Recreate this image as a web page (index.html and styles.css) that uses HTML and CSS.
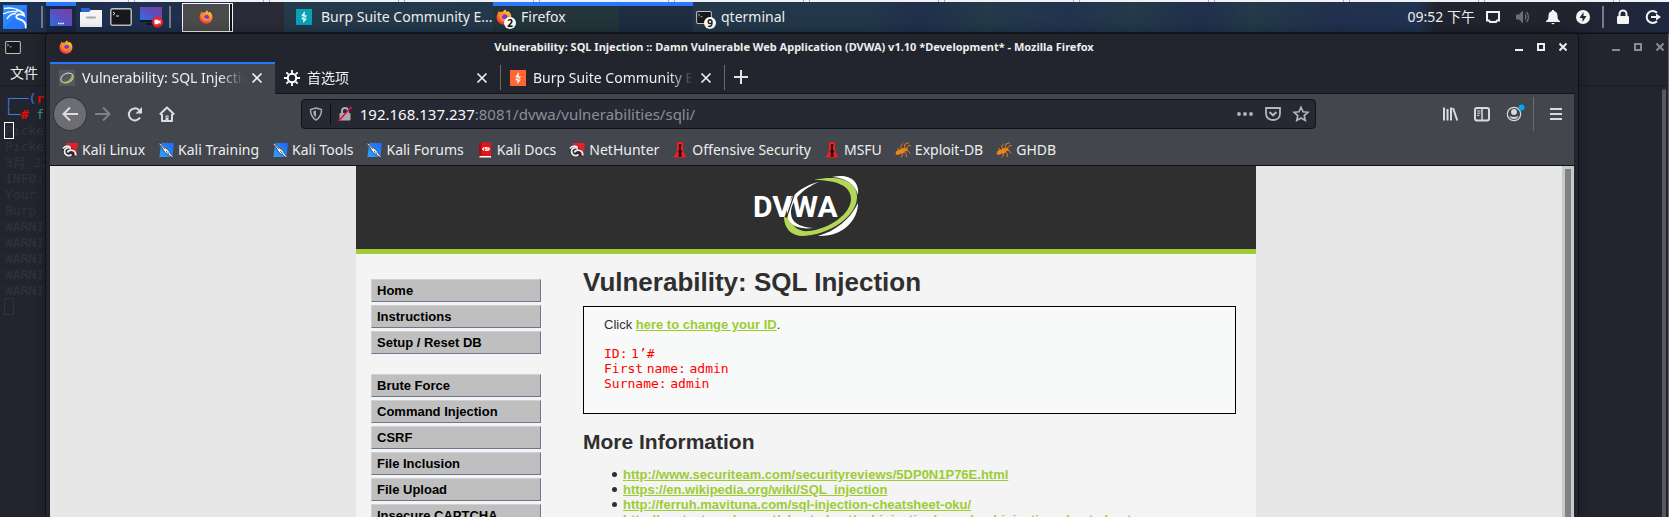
FILE: index.html
```html
<!DOCTYPE html>
<html lang="zh-CN">
<head>
<meta charset="utf-8">
<title>Vulnerability: SQL Injection</title>
<link rel="stylesheet" href="styles.css">
</head>
<body>
<svg class="defs" aria-hidden="true">
  <defs>
    <linearGradient id="g-desk" x1="0" y1="1" x2="1" y2="0"><stop offset="0" stop-color="#2a74e8"/><stop offset=".5" stop-color="#5a4fc0"/><stop offset="1" stop-color="#7d3f9c"/></linearGradient>
    <linearGradient id="g-fox" x1=".8" y1="0" x2=".2" y2="1"><stop offset="0" stop-color="#ffd83a"/><stop offset=".5" stop-color="#ff7a2a"/><stop offset="1" stop-color="#f0284f"/></linearGradient>
    <linearGradient id="g-kali" x1="1" y1="0" x2="0" y2="1"><stop offset="0" stop-color="#1d66f0"/><stop offset="1" stop-color="#2ba6ff"/></linearGradient>
  </defs>
  <symbol id="firefox" viewBox="0 0 16 16"><path fill="url(#g-fox)" d="M2 4C2.200 3 2.700 2.200 3.200 1.800 3.200 2.600 3.600 3 4 3.200 5 2.700 6 2.800 6.800 3 7.200 1.800 8.500.8 9.600.5 9.600 1.600 10.300 2.200 11.200 3L12 2C14.500 3.800 15.600 6.200 15.300 9 14.800 12.800 11.800 15.600 8 15.600 3.600 15.600.600 12.300.600 8.500.600 6.800 1.200 5.200 2 4Z"/><circle cx="8.300" cy="8.600" r="3.300" fill="#6a3fd8"/><path fill="#ff8a2c" d="M2.500 5C4.500 4 6.500 4.600 8 6 6.500 6.400 6 7 6 7.800 6 9.500 7.500 10.400 9.300 10 10.500 9.800 11.400 9 11.800 8 12.500 10.500 10.500 12.600 8 12.600 4.500 12.600 2.600 9.500 2.500 5Z"/></symbol>
  <symbol id="term" viewBox="0 0 22 18"><rect x=".8" y=".8" width="20.400" height="16.400" rx="1.500" fill="#17181b" stroke="#c2c2c2" stroke-width="1.400"/><path d="M3 4l2 1.500L3 7M6 8h3" stroke="#ddd" fill="none"/></symbol>
  <symbol id="burp" viewBox="0 0 16 16"><path fill="#fff" d="M8.700 2v4.400h2.500L8.500 9.500V7.200H5.200zM7.300 14V10.200H5l2.600-3v2.200h3.300z"/></symbol>
  <symbol id="close" viewBox="0 0 12 12"><path d="M1.500 1.500l9 9M10.500 1.500l-9 9" stroke="currentColor" stroke-width="1.700" fill="none"/></symbol>
  <symbol id="kali" viewBox="0 0 16 16"><path fill="url(#g-kali)" d="M3 1h13l-1.500 14H1.500z"/><path fill="#f6f9ff" stroke="#17233c" stroke-width=".7" d="M-.3.6C2.500 1.300 5 3 6.500 5.200l3.300 2.600c1.400 1.200 2 2.400 2.400 3.600l3.900 4.300c-2.300-.4-4.100-1.400-5.300-3C8.600 12 7.200 11 6.300 9.300L5.200 7.800C3.800 5.300 2.200 3 -.3.600z"/><path stroke="#17233c" stroke-width=".7" fill="none" d="M3 3.400l3.800 3.400M8 9l3 2.500"/></symbol>
  <symbol id="kalired" viewBox="0 0 16 16"><path fill="#e3202c" d="M3.500 1H16l-1.500 11-3 3z"/><path fill="#1d1e22" d="M.5 8c0-3 3-5 6.500-4.500l7.500 6-1 5H5C2 14 .5 11 .5 8z" opacity=".75"/><path d="M1 6.500C3 4 6 3.800 8.300 5.300M9 6.500C6 4.500 2.300 6.600 2.500 9.700c.3 3.600 4.800 5.300 7 2.700M5.500 10.500C6 8.200 9.500 7.300 12 9c1.300.9 1.900 2.500 1.500 4.500" fill="none" stroke="#eee" stroke-width="1.800"/></symbol>
  <symbol id="docs" viewBox="0 0 16 16"><path fill="#a70d12" d="M2 .5h3V16H2z"/><path fill="#e5141b" d="M4.500.5H14V14H4.500z"/><path fill="#fff" d="M2.500 14H14v1.500H2.500z"/><path stroke="#fff" fill="none" stroke-width="1.100" d="M7 5.500L5.600 7 7 8.500M11 5.500L12.500 7 11 8.500M10.500 5.500H8.200v1.400h2V8.500H8"/></symbol>
  <symbol id="offsec" viewBox="0 0 16 16"><path fill="#ef1d25" d="M5 0h6v9l3.500 6.500h-13L5 9z"/><path fill="#26090b" d="M7 2h2.200l-.3 5.500 1.300 2.200-1 1.300.6 3.800H6.500L7 11 6 9.700l1.200-2.200z"/></symbol>
  <symbol id="bug" viewBox="0 0 16 16"><path fill="#ee8414" d="M.8 10.500C1.500 8.300 3.500 8 5 7.600 6.500 6 8.500 6.200 9.500 6.500l2.500-.7.800 1.800-2.500 1.600c-1 2.200-3 2.400-4.500 2.200C4.500 12.700 2.300 13 .8 12.500z"/><path stroke="#ee8414" fill="none" stroke-width=".9" d="M7 7L5.500 4 8 1.500M9 7l1-5L14 .6M11 6.500l2.500-3 2.500.2M10 8.500l3.200.2 2 2.800M9 9.500l2 2 .5 3.500M6.500 10.500l1 2.500L6 15.500M4 8L2.500 6"/></symbol>
</svg>

<div class="strip"></div>

<header class="panel">
  <button class="pi kali-menu" aria-label="Applications"><svg width="24" height="24" viewBox="0 0 24 24"><path fill="#2777ff" d="M0 0h24v20l-4 4H0z"/><path fill="#2d9cff" d="M0 0h24L0 24z" opacity=".5"/><path d="M1 3.500c5-1 9-.6 13 1M0 9c5-2.500 10-3.200 14.500-2M4 14c2-4 6-5.500 9-5.500" fill="none" stroke="#fff" stroke-width="1.300"/><path d="M13 4.500c2 .5 5 1.500 7.500 4L21 10.500c-2-1-4-1.300-5.500-1-2.500.5-3 3-1 4 4 1.500 6 2 7.500 4.500 1 1.800 1 3.500.5 5.500" fill="none" stroke="#fff" stroke-width="1.900"/></svg></button>
  <span class="sep"></span>
  <button class="pi active" aria-label="Show desktop"><svg width="22" height="18" viewBox="0 0 22 18"><rect width="22" height="17" fill="url(#g-desk)"/><path d="M8 14.500h6" stroke="#fff" stroke-width="1.500" stroke-dasharray="1.500 .7"/></svg></button>
  <button class="pi" aria-label="Files"><svg width="22" height="21" viewBox="0 0 22 21"><path fill="#2467d6" d="M1 1h8l2 2h9v5H1z"/><path fill="#f3f3f3" d="M0 5h9l2-2h11v17H0z"/><path d="M7 10.500h8" stroke="#aaa" stroke-width="2" stroke-linecap="round"/></svg></button>
  <button class="pi" aria-label="Terminal"><svg width="22" height="18"><use href="#term"/></svg></button>
  <button class="pi" aria-label="Screen recorder"><svg width="23" height="21" viewBox="0 0 23 21"><path fill="url(#g-desk)" d="M0 0h22v13H0z"/><path fill="#17181e" d="M0 13h22v2H0zM6 16h9v2H6z"/><circle cx="17.500" cy="15" r="5.500" fill="#e9252e"/><path fill="#fff" d="M14.500 12.800h4v1.500l2-1.300v4l-2-1.300v1.500h-4z"/></svg></button>
  <span class="sep"></span>
  <button class="workspace" aria-label="Workspace 1"><svg width="14" height="14"><use href="#firefox"/></svg></button>
  <nav class="tasks">
    <button class="task"><span class="ticon burp-teal"><svg width="16" height="16"><use href="#burp"/></svg></span><span class="tlabel">Burp Suite Community E...</span></button>
    <button class="task current"><span class="ticon"><svg width="16" height="16"><use href="#firefox"/></svg><b class="badge">2</b></span><span class="tlabel">Firefox</span></button>
    <button class="task"><span class="ticon"><svg width="16" height="13"><use href="#term"/></svg><b class="badge">9</b></span><span class="tlabel">qterminal</span></button>
  </nav>
  <div class="tray">
    <time>09:52 下午</time>
    <svg width="16" height="16" viewBox="0 0 16 16"><path d="M2 3h12v8.500h-2l-1 1.500H5l-1-1.500H2z" fill="none" stroke="#f2f2f2" stroke-width="2"/></svg>
    <svg width="16" height="16" viewBox="0 0 16 16"><path fill="#6b6e78" d="M1 5.500h3L8 1.500v13l-4-4H1z"/><path d="M10 5.500q2 2.500 0 5M11.500 3q4 5 0 10" stroke="#6b6e78" stroke-width="1.300" fill="none"/></svg>
    <svg width="16" height="16" viewBox="0 0 16 16"><path fill="#f4f4f4" d="M7 1h2v1c2.500.6 3.500 2.500 3.500 5 0 3 .8 4 2.500 5v1H1v-1c1.700-1 2.500-2 2.500-5C3.500 4.500 4.500 2.600 7 2zM6 14h4l-2 1.500z"/></svg>
    <svg width="16" height="16" viewBox="0 0 16 16"><circle cx="8" cy="8" r="7" fill="#f4f4f4"/><path fill="#20242e" d="M8.500 3v4h3l-4 6V9h-3z"/></svg>
    <span class="sep"></span>
    <svg width="16" height="16" viewBox="0 0 16 16"><rect x="2" y="7" width="12" height="8" rx="1" fill="#f4f4f4"/><path d="M4.500 8V5a3.500 3.500 0 0 1 7 0v3" fill="none" stroke="#f4f4f4" stroke-width="2"/></svg>
    <svg width="16" height="16" viewBox="0 0 16 16"><path d="M12 3.800A6 6 0 1 0 12 12.200" fill="none" stroke="#f4f4f4" stroke-width="2"/><path fill="#f4f4f4" d="M6 7h5V4.500L16 8l-5 3.500V9H6z"/></svg>
  </div>
</header>

<div class="desktop">
  <section class="terminal">
    <div class="term-title">
      <svg width="16" height="13"><use href="#term"/></svg>
      <div class="winbtns"><button aria-label="Minimize"><svg width="8" height="8" viewBox="0 0 8 8"><path d="M0 7h8" stroke="currentColor" stroke-width="2"/></svg></button><button aria-label="Maximize"><svg width="8" height="8" viewBox="0 0 8 8"><rect x="1" y="1" width="6" height="6" fill="none" stroke="currentColor" stroke-width="2"/></svg></button><button aria-label="Close"><svg width="8" height="8" viewBox="0 0 8 8"><path d="M.5.5l7 7M7.500.5l-7 7" stroke="currentColor" stroke-width="2"/></svg></button></div>
    </div>
    <div class="term-menu">文件</div>
    <div class="term-body">
<pre><span class="tb">┌──(</span><b class="tr">root</b>
<span class="tb">└─</span><b class="tr">#</b> <span class="tg">firefox</span>
<span class="cursor">P</span>icked
Picked
3月 22
INFO:
Your
Burp
WARNING
WARNING
WARNING
WARNING
WARNING
<span class="cursor dim"> </span></pre>
      <div class="term-scroll"></div>
    </div>
  </section>

  <section class="browser">
    <div class="titlebar">
      <svg width="14" height="14"><use href="#firefox"/></svg>
      <span class="wtitle">Vulnerability: SQL Injection :: Damn Vulnerable Web Application (DVWA) v1.10 *Development* - Mozilla Firefox</span>
      <div class="winbtns"><button aria-label="Minimize"><svg width="8" height="8" viewBox="0 0 8 8"><path d="M0 7h8" stroke="currentColor" stroke-width="2"/></svg></button><button aria-label="Maximize"><svg width="8" height="8" viewBox="0 0 8 8"><rect x="1" y="1" width="6" height="6" fill="none" stroke="currentColor" stroke-width="2"/></svg></button><button aria-label="Close"><svg width="8" height="8" viewBox="0 0 8 8"><path d="M.5.5l7 7M7.500.5l-7 7" stroke="currentColor" stroke-width="2"/></svg></button></div>
    </div>
    <div class="chrome">
      <div class="tabs">
        <div class="tab selected"><svg class="fav" width="16" height="16" viewBox="0 0 16 16"><rect width="16" height="16" fill="#55585c"/><ellipse cx="8" cy="8" rx="6.500" ry="4.500" transform="rotate(-25 8 8)" fill="none" stroke="#d8d8d8"/><path d="M3 12c5 1.500 10-2 10.500-7" fill="none" stroke="#9acb3a" stroke-width="1.300"/></svg><span class="tabtext">Vulnerability: SQL Injection</span><button aria-label="Close tab"><svg width="12" height="12"><use href="#close"/></svg></button></div>
        <div class="tab"><svg class="fav" width="16" height="16" viewBox="0 0 16 16"><circle cx="8" cy="8" r="4.200" fill="none" stroke="#fff" stroke-width="2"/><path d="M8 0v3M8 13v3M0 8h3M13 8h3M2.400 2.400l2 2M11.600 11.600l2 2M13.600 2.400l-2 2M4.400 11.600l-2 2" stroke="#fff" stroke-width="1.800"/></svg><span class="tabtext">首选项</span><button aria-label="Close tab"><svg width="12" height="12"><use href="#close"/></svg></button></div>
        <div class="tab divided"><svg class="fav burp-orange" width="16" height="16"><use href="#burp"/></svg><span class="tabtext">Burp Suite Community Edition</span><button aria-label="Close tab"><svg width="12" height="12"><use href="#close"/></svg></button></div>
        <button class="newtab" aria-label="New tab"><svg width="14" height="14" viewBox="0 0 14 14"><path d="M7 0v14M0 7h14" stroke="#e4e4e4" stroke-width="2"/></svg></button>
      </div>
      <div class="navbar">
        <button class="nb back" aria-label="Back"><svg width="16" height="16" viewBox="0 0 16 16"><path d="M16 8H1.500M8 1.500L1.500 8 8 14.500" fill="none" stroke="#ddd" stroke-width="2"/></svg></button>
        <button class="nb" aria-label="Forward"><svg width="16" height="16" viewBox="0 0 16 16"><path d="M0 8h14.500M8 1.500L14.500 8 8 14.500" fill="none" stroke="#7d8085" stroke-width="2"/></svg></button>
        <button class="nb" aria-label="Reload"><svg width="16" height="16" viewBox="0 0 16 16"><path d="M13 11.500A6 6 0 1 1 12 4" fill="none" stroke="#ddd" stroke-width="2"/><path fill="#ddd" d="M15 1v6.500H8.500z"/></svg></button>
        <button class="nb" aria-label="Home"><svg width="16" height="16" viewBox="0 0 16 16"><path d="M.8 8.500L8 1.500l7.200 7M3 8v7h10V8" fill="none" stroke="#ddd" stroke-width="2" stroke-linejoin="round"/><path fill="#ddd" d="M6.500 9.500h3V15h-3z"/><path fill="#41444a" d="M7.500 10.500h1V12h-1z"/></svg></button>
        <div class="spring"></div>
        <div class="urlbar">
          <svg width="14" height="14" viewBox="0 0 14 14"><path d="M7 1l5.500 1.500c0 5-1 8-5.500 10.500C2.500 10.500 1.500 7.500 1.500 2.500z" fill="none" stroke="#aaabb0" stroke-width="1.500"/><path fill="#aaabb0" d="M7 3.500l-2.700.8c0 3 .7 4.700 2.700 6z"/></svg>
          <span class="usep"></span>
          <svg width="16" height="16" viewBox="0 0 16 16"><rect x="2.500" y="7" width="11" height="7.500" rx="1" fill="#aaabb0"/><path d="M5 8V5a3 3 0 0 1 6 0v3" fill="none" stroke="#aaabb0" stroke-width="2"/><path d="M1.500 15L14.500 1" stroke="#e3124b" stroke-width="1.800"/></svg>
          <a class="address" href="#">192.168.137.237<span>:8081/dvwa/vulnerabilities/sqli/</span></a>
          <svg width="16" height="16" viewBox="0 0 16 16" fill="#b5b6ba"><circle cx="2" cy="8" r="1.900"/><circle cx="8" cy="8" r="1.900"/><circle cx="14" cy="8" r="1.900"/></svg>
          <svg width="16" height="16" viewBox="0 0 16 16" fill="none" stroke="#b5b6ba" stroke-width="1.800"><path d="M1 2h14v5.500c0 4-3 6.500-7 6.500s-7-2.500-7-6.500z"/><path d="M4.500 6L8 9.300 11.500 6" stroke-width="2"/></svg>
          <svg width="16" height="16" viewBox="0 0 16 16" fill="none" stroke="#b5b6ba" stroke-width="1.600"><path d="M8 1.300l2 4.500 4.900.5-3.700 3.300 1.100 4.900L8 12l-4.300 2.500 1.100-4.900L1.100 6.300 6 5.800z"/></svg>
        </div>
        <div class="spring"></div>
        <div class="tools">
          <svg width="16" height="16" viewBox="0 0 16 16" stroke="#dadada" stroke-width="2"><path d="M2 1.500v13M5.500 3v11.500M9 1.500v13M11 2l4.300 12.500"/></svg>
          <svg width="16" height="16" viewBox="0 0 16 16" fill="none" stroke="#dadada" stroke-width="2"><rect x="1" y="2" width="14" height="12.500" rx="2"/><path d="M8 2v12.500" stroke-width="1.500"/><path d="M3 5h3.500M3 7.200h3.500M3 9.400h2.500" stroke-width="1"/></svg>
          <svg width="16" height="16" viewBox="0 0 16 16"><circle cx="8" cy="8" r="6.700" fill="none" stroke="#dadada" stroke-width="1.200"/><circle cx="8" cy="6" r="2.900" fill="#dadada"/><path fill="#dadada" d="M3.500 10c3 1.200 6 1.200 9 0-.8 4-8.200 4-9 0z"/><circle class="dot" cx="15.500" cy="1.500" r="3" fill="#00a8f5"/></svg>
        </div>
        <span class="tsep"></span>
        <button class="burger" aria-label="Menu"><svg width="12" height="14" viewBox="0 0 12 14"><path d="M0 2h12M0 7h12M0 12h12" stroke="#dadada" stroke-width="2"/></svg></button>
      </div>
      <nav class="bookmarks">
        <a href="#"><svg width="16" height="16"><use href="#kalired"/></svg>Kali Linux</a>
        <a href="#"><svg width="16" height="16"><use href="#kali"/></svg>Kali Training</a>
        <a href="#"><svg width="16" height="16"><use href="#kali"/></svg>Kali Tools</a>
        <a href="#"><svg width="16" height="16"><use href="#kali"/></svg>Kali Forums</a>
        <a href="#"><svg width="16" height="16"><use href="#docs"/></svg>Kali Docs</a>
        <a href="#"><svg width="16" height="16"><use href="#kalired"/></svg>NetHunter</a>
        <a href="#"><svg width="16" height="16"><use href="#offsec"/></svg>Offensive Security</a>
        <a href="#"><svg width="16" height="16"><use href="#offsec"/></svg>MSFU</a>
        <a href="#"><svg width="16" height="16"><use href="#bug"/></svg>Exploit-DB</a>
        <a href="#"><svg width="16" height="16"><use href="#bug"/></svg>GHDB</a>
      </nav>
    </div>
    <div class="viewport">
      <div class="canvas">
        <div class="page">
          <header class="banner">
            <svg width="106" height="62" viewBox="0 0 106 62" role="img" aria-label="DVWA">
              <path fill="#b3d657" d="M61 5C88-1 105 7 104 23 103 42 76 60 50 61 38 61 31 53 31 42l5 1C40 53 47 57 56 56 76 54 98 39 98 24 98 11 84 5 61 5z"/>
              <path fill="#fff" d="M79 2C95-2 107 5 105 20 102 9 93 3 79 2zM105 28c0 17-15 34-40 33C82 56 97 45 105 28zM66 7C49 14 38 26 38 38c0 9 8 14 22 15-17 2-26-4-26-16C34 23 48 11 66 7z"/>
              <text class="logotext" x="0" y="42">DVWA</text>
              <path d="M41 20l-7 21" stroke="#2f2f2f" stroke-width="1.200"/>
            </svg>
          </header>
          <div class="cols">
            <nav class="menu">
              <ul><li><a href="#">Home</a></li><li><a href="#">Instructions</a></li><li><a href="#">Setup / Reset DB</a></li></ul>
              <ul><li><a href="#">Brute Force</a></li><li><a href="#">Command Injection</a></li><li><a href="#">CSRF</a></li><li><a href="#">File Inclusion</a></li><li><a href="#">File Upload</a></li><li><a href="#">Insecure CAPTCHA</a></li></ul>
            </nav>
            <main>
              <h1>Vulnerability: SQL Injection</h1>
              <div class="box">
                <p>Click <a href="#">here to change your ID</a>.</p>
                <pre>ID:<i> </i>1’#
First<i> </i>name:<i> </i>admin
Surname:<i> </i>admin</pre>
              </div>
              <h2>More Information</h2>
              <ul class="links">
                <li><a href="#">http://www.securiteam.com/securityreviews/5DP0N1P76E.html</a></li>
                <li><a href="#">https://en.wikipedia.org/wiki/SQL_injection</a></li>
                <li><a href="#">http://ferruh.mavituna.com/sql-injection-cheatsheet-oku/</a></li>
                <li><a href="#">http://pentestmonkey.net/cheat-sheet/sql-injection/mysql-sql-injection-cheat-sheet</a></li>
              </ul>
            </main>
          </div>
        </div>
      </div>
      <div class="scrollbar"></div>
    </div>
  </section>
</div>
</body>
</html>
```
FILE: styles.css
```css
* { box-sizing: border-box; }
html, body { height: 100%; }
body {
  margin: 0;
  display: flex;
  flex-direction: column;
  overflow: hidden;
  background: #23252e;
  color: #eee;
  font: 14px/20px "Noto Sans", "Noto Sans CJK SC", sans-serif;
}
button { border: 0; padding: 0; background: none; color: inherit; font: inherit; display: flex; align-items: center; }
svg { display: block; flex: none; overflow: visible; }
a { color: inherit; text-decoration: none; }
.defs { position: absolute; width: 0; height: 0; }

.strip { flex: none; height: 2px; background: repeating-linear-gradient(90deg, #eef1f5 0 128px, #a9adb3 128px 129px, #eef1f5 129px 134px, #a9adb3 134px 135px); }

/* top panel */
.panel {
  flex: none;
  height: 31px;
  display: flex;
  align-items: center;
  padding: 0 8px 0 3px;
  border-bottom: 1px solid #1a1b22;
  background: linear-gradient(90deg, #1e3050 0, #202f4b 14%, #2a2b38 14%, #2a2b38 17%, #24394a 17%, #22384a 52%, #202f4d 55%, #233a49 59%, #223350 64%, #233a49 68%, #202f4d 72%, #233a49 75%, #21304e 80%, #203350 85%, #21242f 86%, #21242f 94%, #1f2842 100%);
}
.sep { width: 2px; height: 22px; background: #777b87; }
.pi { width: 30px; height: 30px; justify-content: center; }
.kali-menu { width: 24px; margin-right: 11px; }
.pi.active { background: #182744; box-shadow: inset 0 4px #2777ff; padding-top: 2px; }
.pi + .sep { margin: 0 11px 0 3px; }
.kali-menu + .sep { margin-right: 3px; }
.workspace {
  width: 51px;
  height: 29px;
  padding-left: 16px;
  border: 1px solid #f5f5f5;
  background: linear-gradient(90deg, #4c4c4c 46px, #f5f5f5 46px 47px, #111 47px);
}
.tasks { display: flex; margin-left: 52px; flex: 1; }
.task { width: 200px; height: 30px; padding-left: 3px; gap: 9px; white-space: nowrap; }
.task:first-child { width: 208px; padding-left: 11px; }
.task.current { background: linear-gradient(90deg, #23343b 63%, #1f2c42 63%); box-shadow: inset 0 4px #2777ff; }
.ticon { position: relative; width: 16px; height: 16px; display: flex; align-items: center; }
.task .badge {
  position: absolute;
  right: -4px;
  bottom: -4px;
  width: 12px;
  height: 12px;
  border-radius: 50%;
  background: #fff;
  color: #111;
  font: bold 10px/12px "Noto Sans", sans-serif;
}
.burp-teal { background: #07a3b7; }
.burp-orange { background: #ff6633; }
.tray { display: flex; align-items: center; gap: 14px; }
.tray time { margin-right: -4px; }
.tray .sep { margin: 0 -3px 0 -3px; }

/* windows */
.desktop { position: relative; flex: 1; min-height: 0; }
.terminal { height: 100%; display: flex; flex-direction: column; border-right: 1px solid #62646a; border-top: 1px solid #101116; }
.term-title { height: 26px; display: flex; align-items: center; justify-content: space-between; padding: 0 4px 0 5px; }
.term-title .winbtns { color: #8b8c91; }
.winbtns { display: flex; gap: 14px; }
.term-menu { height: 26px; padding: 1px 10px; line-height: 24px; border-bottom: 1px solid #1b1d24; }
.term-body { flex: 1; min-height: 0; display: flex; justify-content: space-between; padding: 3px 2px 0 5px; }
.term-body pre {
  margin: 0;
  padding-top: 2px;
  color: #30333d;
  font: 13px/16px "DejaVu Sans Mono", "Noto Sans CJK SC", monospace;
}
.tb { color: #3e7be8; }
.tr { color: #f00808; }
.tg { color: #3f9b8b; }
.cursor { outline: 1px solid #fff; }
.cursor.dim { outline-color: #30333d; }
.term-scroll { width: 4px; border-radius: 2px 2px 0 0; background: #57585b; }

.browser {
  position: absolute;
  inset: 0 90px 0 45px;
  display: flex;
  flex-direction: column;
  padding: 0 4px;
  border: 1px solid #101116;
  border-bottom: 0;
  border-radius: 4px 4px 0 0;
  background: #23252e;
  box-shadow: 0 0 14px rgba(0, 0, 0, .35);
}
.titlebar { height: 28px; flex: none; display: flex; align-items: center; padding: 0 7px 2px 9px; }
.wtitle { flex: 1; text-align: center; font-weight: bold; font-size: 11px; line-height: 16px; white-space: nowrap; }
.chrome { flex: none; background: #43464d; border-bottom: 1px solid #111216; }
.tabs { display: flex; height: 32px; background: #23252e; box-shadow: inset 0 -1px #14151a; }
.tab { width: 225px; display: flex; align-items: center; gap: 7px; padding: 0 12px 1px 9px; }
.tab.selected { background: #43464d; border-top: 2px solid #2777ff; padding-bottom: 3px; }
.tab.divided { border: solid; border-width: 0 1px; border-image: linear-gradient(transparent 12%, #66686e 12% 86%, transparent 86%) 1; }
.tabtext { flex: 1; overflow: hidden; white-space: nowrap; -webkit-mask-image: linear-gradient(90deg, #000 85%, transparent 100%); mask-image: linear-gradient(90deg, #000 85%, transparent 100%); }
.newtab { padding: 0 9px 2px; }
.navbar { display: flex; align-items: center; height: 40px; padding: 0 12px 0 4px; }
.nb { width: 32px; height: 32px; justify-content: center; }
.nb.back { border-radius: 50%; background: #6c6e73; box-shadow: 0 0 0 1px #35373c; margin-right: 1px; }
.spring { flex: 2; }
.urlbar { flex: 17; height: 30px; display: flex; align-items: center; gap: 12px; padding: 0 6px 0 7px; background: #262834; border: 1px solid #111217; border-radius: 4px; }
.urlbar .usep { width: 1px; height: 22px; margin: 0 -6px 0 -5px; background: #0e0f13; }
.address { flex: 1; margin-left: -5px; color: #fafafa; font-size: 15px; white-space: nowrap; }
.address span { color: #8d8e95; }
.tools { display: flex; gap: 16px; margin-left: 8px; }
.tsep { width: 1px; height: 34px; margin: 0 16px 0 11px; background: #6a6c70; }
.bookmarks { display: flex; gap: 13px; height: 31px; padding: 1px 12px 0; align-items: center; white-space: nowrap; }
.bookmarks a { display: flex; align-items: center; gap: 4px; }

/* web page */
.viewport { flex: 1; min-height: 0; display: flex; color: #2f2f2f; font: 13px/15px "Liberation Sans", Arial, sans-serif; }
.canvas { flex: 1; overflow: hidden; background: #e7e7e7; }
.scrollbar { width: 12px; border: solid #c9c9cb; border-width: 3px 3px 0; background: #7d8383; }
.page { max-width: 900px; min-height: 100%; margin: 0 auto; background: #f4f4f4; }
.banner { height: 88px; padding-top: 9px; display: flex; justify-content: center; background: #2f2f2f; border-bottom: 5px solid #a1cc33; }
.logotext { font: bold 30px Roboto, sans-serif; fill: #fff; }
.cols { display: flex; gap: 42px; padding: 0 20px 0 15px; }
.menu { width: 170px; flex: none; padding-top: 25px; font-weight: bold; color: #000; }
.menu ul { margin: 0 0 20px; padding: 0; list-style: none; display: grid; gap: 3px; }
.menu a { display: block; padding: 3px 5px; background: #bfbfbf; border: 1px solid; border-color: #d0d0d0 #6b7890 #6b7890 #d0d0d0; }
main { flex: 1; }
h1 { margin: 13px 0 9px; font-size: 26px; line-height: 30px; }
.box { border: 1px solid #000; background: #f8faf9; padding: 10px 20px 22px; }
.box p { margin: 0 0 14px; }
.box a, .links a { color: #9ccc33; font-weight: bold; text-decoration: underline; }
.box pre { margin: 0; color: #f00; font: 13px/15px "DejaVu Sans Mono", monospace; }
.box pre i { font: 13px/15px "Liberation Sans", Arial, sans-serif; }
h2 { margin: 15px 0 12px; font-size: 21px; line-height: 26px; }
.links { margin: 0; padding-left: 29px; list-style: none; white-space: nowrap; }
.links li { display: flex; align-items: center; gap: 6px; }
.links li::before { content: ""; width: 5px; height: 5px; border-radius: 50%; background: #2f2f2f; }
```
